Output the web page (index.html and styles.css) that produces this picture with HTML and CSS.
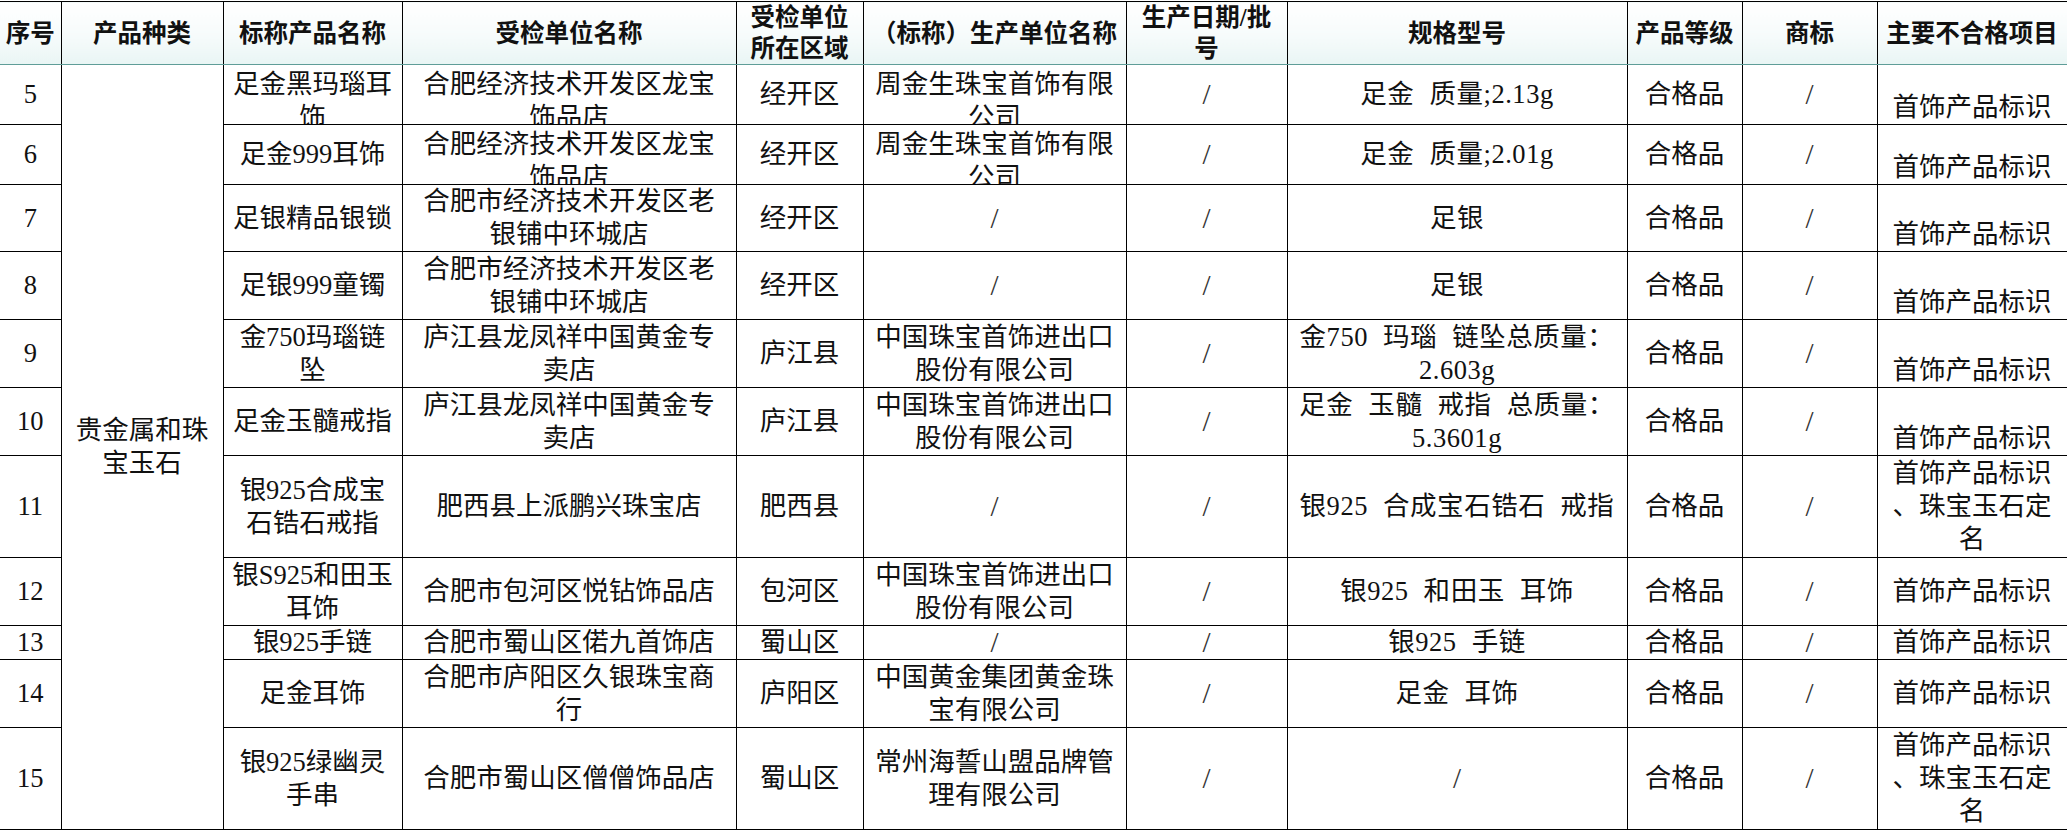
FILE: index.html
```html
<!DOCTYPE html>
<html lang="zh-CN">
<head>
<meta charset="utf-8">
<title>抽检结果</title>
<link rel="stylesheet" href="styles.css">
</head>
<body>
<table class="sheet">
  <colgroup>
    <col class="w-no"><col class="w-cat"><col class="w-name"><col class="w-unit"><col class="w-area"><col class="w-maker"><col class="w-date"><col class="w-spec"><col class="w-grade"><col class="w-mark"><col class="w-issue">
  </colgroup>
  <thead>
    <tr class="h60">
      <th>序号</th>
      <th>产品种类</th>
      <th>标称产品名称</th>
      <th>受检单位名称</th>
      <th>受检单位<br>所在区域</th>
      <th>（标称）生产单位名称</th>
      <th>生产日期/批<br>号</th>
      <th>规格型号</th>
      <th>产品等级</th>
      <th>商标</th>
      <th>主要不合格项目</th>
    </tr>
  </thead>
  <tbody>
    <tr class="h60">
      <td>5</td>
      <td rowspan="11" class="cat">贵金属和珠<br>宝玉石</td>
      <td><div class="clip">足金黑玛瑙耳<br>饰</div></td>
      <td><div class="clip">合肥经济技术开发区龙宝<br>饰品店</div></td>
      <td>经开区</td>
      <td><div class="clip">周金生珠宝首饰有限<br>公司</div></td>
      <td class="sl">/</td>
      <td class="spec">足金 质量;2.13g</td>
      <td>合格品</td>
      <td class="sl">/</td>
      <td class="bot">首饰产品标识</td>
    </tr>
    <tr class="h60">
      <td>6</td>
      <td>足金999耳饰</td>
      <td><div class="clip">合肥经济技术开发区龙宝<br>饰品店</div></td>
      <td>经开区</td>
      <td><div class="clip">周金生珠宝首饰有限<br>公司</div></td>
      <td class="sl">/</td>
      <td class="spec">足金 质量;2.01g</td>
      <td>合格品</td>
      <td class="sl">/</td>
      <td class="bot">首饰产品标识</td>
    </tr>
    <tr class="h67">
      <td>7</td>
      <td>足银精品银锁</td>
      <td>合肥市经济技术开发区老<br>银铺中环城店</td>
      <td>经开区</td>
      <td class="sl">/</td>
      <td class="sl">/</td>
      <td class="spec">足银</td>
      <td>合格品</td>
      <td class="sl">/</td>
      <td class="bot">首饰产品标识</td>
    </tr>
    <tr class="h68">
      <td>8</td>
      <td>足银999童镯</td>
      <td>合肥市经济技术开发区老<br>银铺中环城店</td>
      <td>经开区</td>
      <td class="sl">/</td>
      <td class="sl">/</td>
      <td class="spec">足银</td>
      <td>合格品</td>
      <td class="sl">/</td>
      <td class="bot">首饰产品标识</td>
    </tr>
    <tr class="h68">
      <td>9</td>
      <td>金750玛瑙链<br>坠</td>
      <td>庐江县龙凤祥中国黄金专<br>卖店</td>
      <td>庐江县</td>
      <td>中国珠宝首饰进出口<br>股份有限公司</td>
      <td class="sl">/</td>
      <td class="spec">金750 玛瑙 链坠总质量：<br>2.603g</td>
      <td>合格品</td>
      <td class="sl">/</td>
      <td class="bot">首饰产品标识</td>
    </tr>
    <tr class="h68">
      <td>10</td>
      <td>足金玉髓戒指</td>
      <td>庐江县龙凤祥中国黄金专<br>卖店</td>
      <td>庐江县</td>
      <td>中国珠宝首饰进出口<br>股份有限公司</td>
      <td class="sl">/</td>
      <td class="spec">足金 玉髓 戒指 总质量：<br>5.3601g</td>
      <td>合格品</td>
      <td class="sl">/</td>
      <td class="bot">首饰产品标识</td>
    </tr>
    <tr class="h102">
      <td>11</td>
      <td>银925合成宝<br>石锆石戒指</td>
      <td>肥西县上派鹏兴珠宝店</td>
      <td>肥西县</td>
      <td class="sl">/</td>
      <td class="sl">/</td>
      <td class="spec">银925 合成宝石锆石 戒指</td>
      <td>合格品</td>
      <td class="sl">/</td>
      <td>首饰产品标识<br>、珠宝玉石定<br>名</td>
    </tr>
    <tr class="h68">
      <td>12</td>
      <td>银S925和田玉<br>耳饰</td>
      <td>合肥市包河区悦钻饰品店</td>
      <td>包河区</td>
      <td>中国珠宝首饰进出口<br>股份有限公司</td>
      <td class="sl">/</td>
      <td class="spec">银925 和田玉 耳饰</td>
      <td>合格品</td>
      <td class="sl">/</td>
      <td>首饰产品标识</td>
    </tr>
    <tr class="h34">
      <td>13</td>
      <td>银925手链</td>
      <td>合肥市蜀山区偌九首饰店</td>
      <td>蜀山区</td>
      <td class="sl">/</td>
      <td class="sl">/</td>
      <td class="spec">银925 手链</td>
      <td>合格品</td>
      <td class="sl">/</td>
      <td>首饰产品标识</td>
    </tr>
    <tr class="h68">
      <td>14</td>
      <td>足金耳饰</td>
      <td>合肥市庐阳区久银珠宝商<br>行</td>
      <td>庐阳区</td>
      <td>中国黄金集团黄金珠<br>宝有限公司</td>
      <td class="sl">/</td>
      <td class="spec">足金 耳饰</td>
      <td>合格品</td>
      <td class="sl">/</td>
      <td>首饰产品标识</td>
    </tr>
    <tr class="h102">
      <td>15</td>
      <td>银925绿幽灵<br>手串</td>
      <td>合肥市蜀山区僧僧饰品店</td>
      <td>蜀山区</td>
      <td>常州海誓山盟品牌管<br>理有限公司</td>
      <td class="sl">/</td>
      <td class="sl">/</td>
      <td>合格品</td>
      <td class="sl">/</td>
      <td>首饰产品标识<br>、珠宝玉石定<br>名</td>
    </tr>
    <tr class="h60">
      <td></td><td></td><td></td><td></td><td></td><td></td><td></td><td></td><td></td><td></td><td></td>
    </tr>
  </tbody>
</table>
</body>
</html>
```

FILE: styles.css
```css
html, body {
  margin: 0;
  padding: 0;
  background: #ffffff;
}

body {
  padding-top: 1px;
  overflow: hidden;
}

.sheet {
  border-collapse: collapse;
  table-layout: fixed;
  width: 2067px;
  font-family: "Liberation Serif", "Noto Sans CJK SC", serif;
  font-size: 26.5px;
  line-height: 33px;
  color: #111;
}

.w-no { width: 61px; }
.w-cat { width: 162px; }
.w-name { width: 179px; }
.w-unit { width: 334px; }
.w-area { width: 127px; }
.w-maker { width: 263px; }
.w-date { width: 161px; }
.w-spec { width: 340px; }
.w-grade { width: 115px; }
.w-mark { width: 135px; }
.w-issue { width: 190px; }

.sheet th,
.sheet td {
  border: 1px solid #000;
  padding: 0 2px;
  text-align: center;
  vertical-align: middle;
  white-space: nowrap;
  overflow: hidden;
}

.sheet tr > :first-child {
  border-left: none;
}

.sheet thead th {
  background: linear-gradient(#ffffff 0%, #f6fbfb 55%, #e9f5f4 100%);
  font-size: 24.5px;
  line-height: 31px;
  font-weight: 700;
  border-bottom: 1px solid #5f9d98;
}

.h34 { height: 34px; }
.h60 { height: 60px; }
.h67 { height: 67px; }
.h68 { height: 68px; }
.h102 { height: 102px; }

.clip {
  height: 59px;
  overflow: hidden;
  padding-top: 3px;
  box-sizing: border-box;
}

.sheet td.bot {
  vertical-align: bottom;
}

.sheet td.spec {
  word-spacing: 0.3em;
  letter-spacing: 0.02em;
}

.sheet td.sl {
  font-size: 29px;
  color: #333;
}
```
